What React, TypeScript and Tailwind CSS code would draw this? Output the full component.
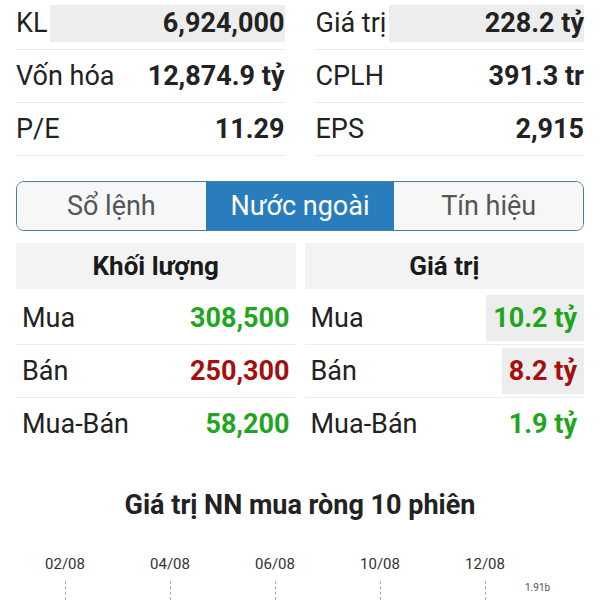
import React from 'react'

const STATS: [string, string, string, string, boolean][] = [
  ['KL', '6,924,000', 'Giá trị', '228.2 tỷ', true],
  ['Vốn hóa', '12,874.9 tỷ', 'CPLH', '391.3 tr', false],
  ['P/E', '11.29', 'EPS', '2,915', false],
]

const TABS = ['Sổ lệnh', 'Nước ngoài', 'Tín hiệu']

const VOL = [
  { label: 'Mua', value: '308,500', color: 'text-[#1fa51f]' },
  { label: 'Bán', value: '250,300', color: 'text-[#a50f0f]' },
  { label: 'Mua-Bán', value: '58,200', color: 'text-[#1fa51f]' },
]

const VAL = [
  { label: 'Mua', value: '10.2 tỷ', color: 'text-[#1fa51f]', hl: true },
  { label: 'Bán', value: '8.2 tỷ', color: 'text-[#a50f0f]', hl: true },
  { label: 'Mua-Bán', value: '1.9 tỷ', color: 'text-[#1fa51f]', hl: false },
]

const DATES = ['02/08', '04/08', '06/08', '10/08', '12/08']

function StatRow({ label, value, hl, first }: { label: string; value: string; hl: boolean; first: boolean }) {
  return (
    <div className={`flex items-center border-b border-[#ececec] ${first ? 'h-[50px] pb-[3px]' : 'h-[53px]'}`}>
      <span className="text-[27px] text-[#222] pr-[3px]">{label}</span>
      <span
        className={`flex-1 h-[37px] flex items-center justify-end text-[27px] font-bold text-[#222] ${hl ? 'bg-[#ededed]' : ''}`}
      >
        {value}
      </span>
    </div>
  )
}

function FlowTable({
  title,
  rows,
  boxed,
}: {
  title: string
  rows: { label: string; value: string; color: string; hl?: boolean }[]
  boxed?: boolean
}) {
  return (
    <div className="flex-1">
      <div className="h-[46px] bg-[#f3f3f3] flex items-center justify-center text-[26px] font-bold text-[#1a1a1a]">
        {title}
      </div>
      <div className="pt-[3px]">
        {rows.map((r, i) => (
          <div
            key={r.label}
            className={`h-[53px] flex items-center justify-between pl-[6px] ${i < rows.length - 1 ? 'border-b border-[#ececec]' : ''}`}
          >
            <span className="text-[27px] text-[#222]">{r.label}</span>
            <span
              className={`text-[27px] font-bold ${r.color} ${boxed ? 'h-[46px] flex items-center px-[7px]' : 'pr-[6px]'} ${r.hl ? 'bg-[#ededed]' : ''}`}
            >
              {r.value}
            </span>
          </div>
        ))}
      </div>
    </div>
  )
}

export default function App() {
  return (
    <div className="w-[600px] h-[600px] overflow-hidden bg-white px-4 font-['Roboto','Liberation_Sans',sans-serif]">
      {/* Stock stats */}
      <div className="grid grid-cols-2 gap-x-[31px]">
        <div>
          {STATS.map(([l, v, , , hl], i) => (
            <StatRow key={l} label={l} value={v} hl={hl} first={i === 0} />
          ))}
        </div>
        <div>
          {STATS.map(([, , l, v, hl], i) => (
            <StatRow key={l} label={l} value={v} hl={hl} first={i === 0} />
          ))}
        </div>
      </div>

      {/* Tabs */}
      <div className="mt-[25px] h-[50px] flex border-[1.5px] border-[#4d7d9c] rounded-[8px] overflow-hidden">
        {TABS.map((t, i) => (
          <div
            key={t}
            className={`flex-1 flex items-center justify-center text-[27px] ${
              i === 1 ? 'bg-[#2a7dbd] text-white' : 'bg-[#f7f7f7] text-[#555]'
            }`}
          >
            {t}
          </div>
        ))}
      </div>

      {/* Foreign flow */}
      <div className="mt-[12px] flex gap-[9px]">
        <FlowTable title="Khối lượng" rows={VOL} />
        <FlowTable title="Giá trị" rows={VAL} boxed />
      </div>

      {/* Chart */}
      <div className="mt-[37px] text-center text-[27px] leading-[34px] font-bold text-[#222]">
        Giá trị NN mua ròng 10 phiên
      </div>
      <div className="relative mt-[33px] h-[80px]">
        {DATES.map((d, i) => (
          <div key={d} className="absolute top-0 flex flex-col items-center w-[60px]" style={{ left: 49 + i * 105 - 30 }}>
            <span className="text-[15px] text-[#333] leading-[18px]">{d}</span>
            <div className="mt-[8px] h-[40px] border-l border-dashed border-[#aaa]" />
          </div>
        ))}
        <span className="absolute left-[509px] top-[27px] text-[10px] leading-[12px] text-[#555]">1.91b</span>
      </div>
    </div>
  )
}
